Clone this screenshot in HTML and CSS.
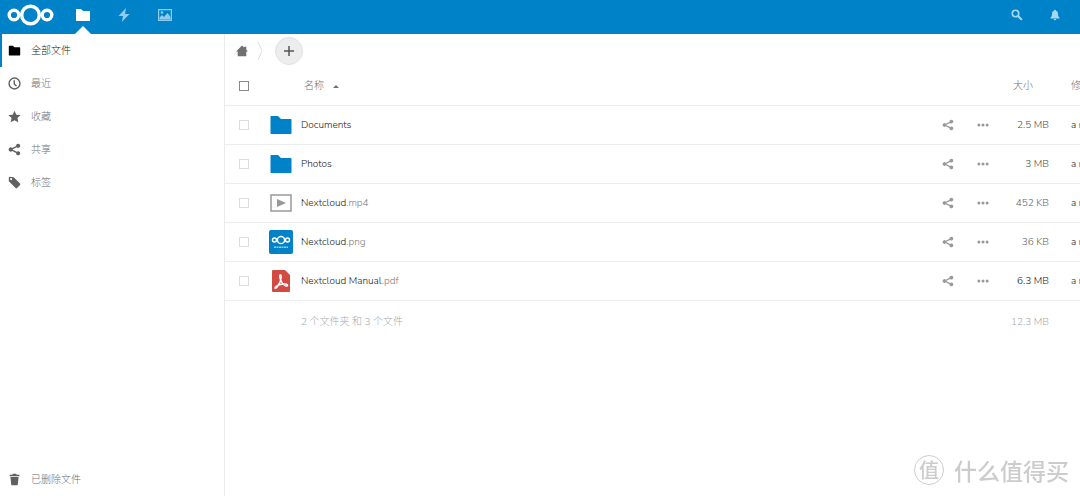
FILE: index.html
```html
<!DOCTYPE html>
<html lang="zh-CN">
<head>
<meta charset="utf-8">
<title>文件 - Nextcloud</title>
<link rel="stylesheet" href="styles.css">
</head>
<body>
<svg class="sprite" aria-hidden="true">
  <symbol id="folder" viewBox="0 0 16 16"><path d="M1.5 2a.5.5 0 0 0-.5.5v11c0 .3.2.5.5.5h13c.3 0 .5-.2.5-.5v-9a.5.5 0 0 0-.5-.5H8L6 2z"/></symbol>
  <symbol id="share" viewBox="0 0 16 16"><path d="M12.500 1A2.500 2.500 0 0 0 10 3.800L5.100 6.200a2.500 2.500 0 1 0 0 3.600l4.900 2.400a2.500 2.500 0 1 0 .8-1.500L5.900 8.300v-.6l4.900-2.400A2.500 2.500 0 1 0 12.500 1z"/></symbol>
  <symbol id="more" viewBox="0 0 16 16"><circle cx="2.500" cy="8" r="2"/><circle cx="8" cy="8" r="2"/><circle cx="13.500" cy="8" r="2"/></symbol>
  <symbol id="rings" viewBox="0 0 46 22"><g fill="none" stroke="currentColor" stroke-width="3.400"><circle cx="23" cy="11" r="8.800"/><circle cx="6.500" cy="11" r="4.800"/><circle cx="39.500" cy="11" r="4.800"/></g></symbol>
</svg>
<header class="topbar">
  <a class="logo" href="#" aria-label="Nextcloud"><svg class="logo-mark"><use href="#rings"/></svg></a>
  <nav class="apps" aria-label="应用">
    <a class="app app-active" href="#" aria-label="文件"><svg class="app-icon"><use href="#folder"/></svg></a>
    <a class="app" href="#" aria-label="动态"><svg class="app-icon" viewBox="0 0 16 16"><path d="M10 1 2.500 9H7l-1.200 6L13.500 7H9z"/></svg></a>
    <a class="app" href="#" aria-label="相册"><svg class="app-icon" viewBox="0 0 16 16"><path fill-rule="evenodd" d="M1 2h14v12H1zM2.200 3.200v9.600h11.600V3.200z"/><path d="M2.500 12.500v-2L5 8l2 2 3.500-4 3 4v2.500z"/><circle cx="5" cy="5.500" r="1.300"/></svg></a>
  </nav>
  <button class="tool" type="button" aria-label="搜索"><svg class="tool-icon" viewBox="0 0 16 16"><g fill="none" stroke="currentColor"><circle cx="6" cy="6" r="4.300" stroke-width="2.200"/><path d="m9 9 5.500 5.500" stroke-width="2.800"/></g></svg></button>
  <button class="tool" type="button" aria-label="通知"><svg class="tool-icon" viewBox="0 0 16 16"><path d="M8 1c-.8 0-1.400.6-1.400 1.400C4.600 3 4 4.800 4 7c0 2.500-.8 3.500-2 4.500V12.500h12v-1c-1.200-1-2-2-2-4.500 0-2.200-.6-4-2.600-4.600C9.400 1.600 8.800 1 8 1zM6.200 13.300a1.800 1.800 0 0 0 3.600 0z"/></svg></button>
</header>
<div class="page">
  <nav class="sidebar" aria-label="文件视图">
    <a class="side-link side-active" href="#"><svg class="icon"><use href="#folder"/></svg>全部文件</a>
    <a class="side-link" href="#"><svg class="icon" viewBox="0 0 16 16"><circle cx="8" cy="8" r="6.700" fill="none" stroke="currentColor" stroke-width="1.700"/><path d="M7.700 4v4.500L10.500 11" fill="none" stroke="currentColor" stroke-width="1.700"/></svg>最近</a>
    <a class="side-link" href="#"><svg class="icon" viewBox="0 0 16 16"><path d="m8 .8 2.200 4.900 5.300.6-3.900 3.600 1.100 5.300L8 12.600l-4.700 2.600 1.100-5.300L.5 6.300l5.300-.6z"/></svg>收藏</a>
    <a class="side-link" href="#"><svg class="icon"><use href="#share"/></svg>共享</a>
    <a class="side-link" href="#"><svg class="icon" viewBox="0 0 16 16"><path fill-rule="evenodd" d="M1 2v4.500l8.300 8.300c.6.600 1.300.6 1.900 0l3.600-3.600c.6-.6.6-1.300 0-1.900L7 1.500 2 1c-.6 0-1 .4-1 1zm2.800.5a1.300 1.300 0 1 1 0 2.600 1.300 1.300 0 0 1 0-2.600z"/></svg>标签</a>
    <a class="side-link side-bottom" href="#"><svg class="icon" viewBox="0 0 16 16"><path d="M6 1h4l.7 1H14v2H2V2h3.300zM3 5h10l-1 9.500c0 .3-.3.500-.6.500H4.600a.6.6 0 0 1-.6-.5z"/></svg>已删除文件</a>
  </nav>
  <main class="content">
    <div class="controls">
      <a class="home" href="#" aria-label="主目录"><svg class="icon" viewBox="1 1 14 14"><path d="M8 1.500 1 8.500h2V14h10V8.500h2l-2-2V3h-2.500v1z"/></svg></a>
      <svg class="crumb-arrow" viewBox="0 0 6 20"><path d="m1 1 4 9-4 9" fill="none" stroke="currentColor"/></svg>
      <button class="add" type="button" aria-label="新建"><svg class="icon" viewBox="0 0 12 12"><path d="M6 1v10M1 6h10" stroke="currentColor" stroke-width="1.500"/></svg></button>
    </div>
    <table class="files">
      <thead>
        <tr>
          <th class="col-check"><input class="check check-all" type="checkbox" aria-label="全选"></th>
          <th class="col-thumb"></th>
          <th class="col-name"><span class="sort">名称<svg class="sort-arrow" viewBox="0 0 6 4"><path d="M0 4 3 1l3 3z"/></svg></span></th>
          <th class="col-action"></th>
          <th class="col-action"></th>
          <th class="col-size">大小</th>
          <th class="col-date">修改</th>
        </tr>
      </thead>
      <tbody>
        <tr>
          <td><input class="check" type="checkbox" aria-label="选择 Documents"></td>
          <td><svg class="thumb thumb-folder"><use href="#folder"/></svg></td>
          <td><a class="file" href="#">Documents</a></td>
          <td><button class="action" type="button" aria-label="共享"><svg class="icon"><use href="#share"/></svg></button></td>
          <td><button class="action" type="button" aria-label="更多"><svg class="icon"><use href="#more"/></svg></button></td>
          <td class="size size-mid">2.5 MB</td><td class="date">a minute ago</td>
        </tr>
        <tr>
          <td><input class="check" type="checkbox" aria-label="选择 Photos"></td>
          <td><svg class="thumb thumb-folder"><use href="#folder"/></svg></td>
          <td><a class="file" href="#">Photos</a></td>
          <td><button class="action" type="button" aria-label="共享"><svg class="icon"><use href="#share"/></svg></button></td>
          <td><button class="action" type="button" aria-label="更多"><svg class="icon"><use href="#more"/></svg></button></td>
          <td class="size size-mid">3 MB</td><td class="date">a minute ago</td>
        </tr>
        <tr>
          <td><input class="check" type="checkbox" aria-label="选择 Nextcloud.mp4"></td>
          <td><svg class="thumb thumb-video" viewBox="0 0 24 24"><path d="M2 4h20v16H2z" fill="none" stroke="currentColor" stroke-width="1.500"/><path d="m8 8 9 4-9 4z"/></svg></td>
          <td><a class="file" href="#">Nextcloud<span class="ext">.mp4</span></a></td>
          <td><button class="action" type="button" aria-label="共享"><svg class="icon"><use href="#share"/></svg></button></td>
          <td><button class="action" type="button" aria-label="更多"><svg class="icon"><use href="#more"/></svg></button></td>
          <td class="size">452 KB</td><td class="date">a minute ago</td>
        </tr>
        <tr>
          <td><input class="check" type="checkbox" aria-label="选择 Nextcloud.png"></td>
          <td><svg class="thumb thumb-image" viewBox="0 0 24 24"><rect class="thumb-bg" width="24" height="24" rx="2"/><g fill="none" stroke="currentColor" stroke-width="1.500"><circle cx="12" cy="10" r="3.600"/><circle cx="5.500" cy="10" r="2"/><circle cx="18.500" cy="10" r="2"/></g><path d="M5 17.300h14" stroke="currentColor" stroke-width="1.400" stroke-dasharray="2 .5" opacity=".6"/></svg></td>
          <td><a class="file" href="#">Nextcloud<span class="ext">.png</span></a></td>
          <td><button class="action" type="button" aria-label="共享"><svg class="icon"><use href="#share"/></svg></button></td>
          <td><button class="action" type="button" aria-label="更多"><svg class="icon"><use href="#more"/></svg></button></td>
          <td class="size">36 KB</td><td class="date">a minute ago</td>
        </tr>
        <tr>
          <td><input class="check" type="checkbox" aria-label="选择 Nextcloud Manual.pdf"></td>
          <td><svg class="thumb thumb-pdf" viewBox="0 0 24 24"><path d="M4 1h12l5 5v16a1 1 0 0 1-1 1H4a1 1 0 0 1-1-1V2a1 1 0 0 1 1-1z"/><path class="pdf-mark" d="M11.500 6c-1.800 0-.6 4 1.200 7 1.500 2.400 3.600 4.400 5.300 4 1.300-.4.600-2-2-2-3.600 0-8.200 1.500-9.700 3.200-.9 1.100.3 1.800 1.500.3C9.900 15.900 12 11 12.200 8.500 12.300 7 12.200 6 11.500 6z"/></svg></td>
          <td><a class="file" href="#">Nextcloud Manual<span class="ext">.pdf</span></a></td>
          <td><button class="action" type="button" aria-label="共享"><svg class="icon"><use href="#share"/></svg></button></td>
          <td><button class="action" type="button" aria-label="更多"><svg class="icon"><use href="#more"/></svg></button></td>
          <td class="size size-dark">6.3 MB</td><td class="date">a minute ago</td>
        </tr>
      </tbody>
      <tfoot>
        <tr><td></td><td></td><td>2 个文件夹 和 3 个文件</td><td></td><td></td><td class="size-total">12.3 MB</td><td></td></tr>
      </tfoot>
    </table>
  </main>
</div>
<div class="watermark"><span class="seal">值</span>什么值得买</div>
</body>
</html>
```
FILE: styles.css
```css
* { box-sizing: border-box; }

body {
  margin: 0;
  min-height: 100vh;
  display: flex;
  flex-direction: column;
  overflow: hidden;
  background: #fff;
  color: #222;
  font: 300 10px/16px Nunito, "Open Sans", "Noto Sans CJK SC", sans-serif;
}

a { color: inherit; text-decoration: none; }
button { padding: 0; border: 0; background: none; color: inherit; font: inherit; }
svg { display: block; fill: currentColor; }
.sprite { position: absolute; width: 0; height: 0; }
.icon { width: 12px; height: 12px; flex: none; }

.topbar {
  display: flex;
  align-items: stretch;
  height: 34px;
  padding: 0 6px 0 7px;
  background: #0082c9;
  color: #fff;
}
.logo { display: flex; align-items: center; padding-bottom: 4px; }
.logo-mark { width: 47px; height: 22px; }
.apps { display: flex; flex: 1; padding-left: 8px; }
.app {
  position: relative;
  display: flex;
  align-items: center;
  justify-content: center;
  width: 41px;
  padding-bottom: 4px;
  color: #8fcbed;
}
.app-icon { width: 16px; height: 16px; }
.app-active { color: #fff; }
.app-active::after {
  content: "";
  position: absolute;
  bottom: 0;
  left: 50%;
  margin-left: -8px;
  border: 8px solid transparent;
  border-top: 0;
  border-bottom-color: #fff;
}
.tool {
  display: flex;
  align-items: center;
  justify-content: center;
  width: 38px;
  padding-bottom: 4px;
  color: #a6d8f2;
}
.tool-icon { width: 12px; height: 12px; }

.page { display: flex; flex: 1; }
.sidebar {
  display: flex;
  flex-direction: column;
  width: 225px;
  flex: none;
  border-right: 1px solid #ebebeb;
}
.side-link {
  display: flex;
  align-items: center;
  gap: 10px;
  height: 33px;
  padding-left: 6px;
  border-left: 2px solid transparent;
  color: #707070;
}
.side-link .icon { width: 13px; height: 13px; color: #606060; }
.side-active { border-left-color: #0082c9; color: #222; }
.side-active .icon { color: #000; }
.side-bottom { margin-top: auto; }

.content { flex: 1; min-width: 0; overflow: hidden; }
.controls { display: flex; align-items: center; height: 33px; padding-left: 11px; }
.home { color: #707070; }
.crumb-arrow { width: 6px; height: 20px; margin-left: 9px; color: #ddd; }
.add {
  display: flex;
  align-items: center;
  justify-content: center;
  width: 28px;
  height: 28px;
  margin-left: 12px;
  border: 1px solid #e2e2e2;
  border-radius: 50%;
  background: #ededed;
  color: #555;
}

.files { width: 100%; table-layout: fixed; border-collapse: collapse; }
.files th, .files td { height: 39px; padding: 0; text-align: left; font-weight: 300; white-space: nowrap; }
.files tr { border-bottom: 1px solid #ededed; }
.files tfoot tr { border: 0; }
.files th { height: 38px; color: #707070; }
.files tfoot td { height: 44px; color: #aaa; }
.col-check { width: 44px; }
.col-thumb { width: 32px; }
.col-action { width: 35px; }
.col-size { width: 49px; }
.col-date { width: 31px; }
.files th.col-size { padding-right: 16px; text-align: right; }
.files td.size, .files td.size-total { text-align: right; }
.files th.col-date, .files td.date { padding-left: 22px; overflow: hidden; }
.sort { display: flex; align-items: center; gap: 9px; padding-left: 3px; }
.sort-arrow { width: 6px; height: 4px; }
.size { color: #666; }
.size-mid { color: #505050; }
.size-dark { color: #222; }
.ext { color: #808080; }

.check {
  display: block;
  appearance: none;
  width: 10px;
  height: 10px;
  margin: 0 0 0 14px;
  border: 1px solid #ddd;
  background: #fff;
}
.check-all { border-color: #888; }
.thumb { width: 24px; height: 24px; }
.thumb-folder { color: #0082c9; }
.thumb-video { color: #999; }
.thumb-image { color: #fff; }
.thumb-bg { fill: #0082c9; }
.thumb-pdf { color: #d14b43; }
.pdf-mark { fill: none; stroke: #fff; stroke-width: 1.4px; }
.action {
  display: flex;
  align-items: center;
  justify-content: center;
  width: 35px;
  height: 24px;
  color: #999;
}

.watermark {
  position: fixed;
  right: 11px;
  bottom: 11px;
  display: flex;
  align-items: center;
  gap: 10px;
  color: #ccc;
  font: 500 23px/30px "Noto Sans CJK SC", sans-serif;
}
.seal {
  width: 30px;
  height: 30px;
  border: 1px solid #ccc;
  border-radius: 50%;
  font-size: 20px;
  line-height: 28px;
  text-align: center;
}
```
